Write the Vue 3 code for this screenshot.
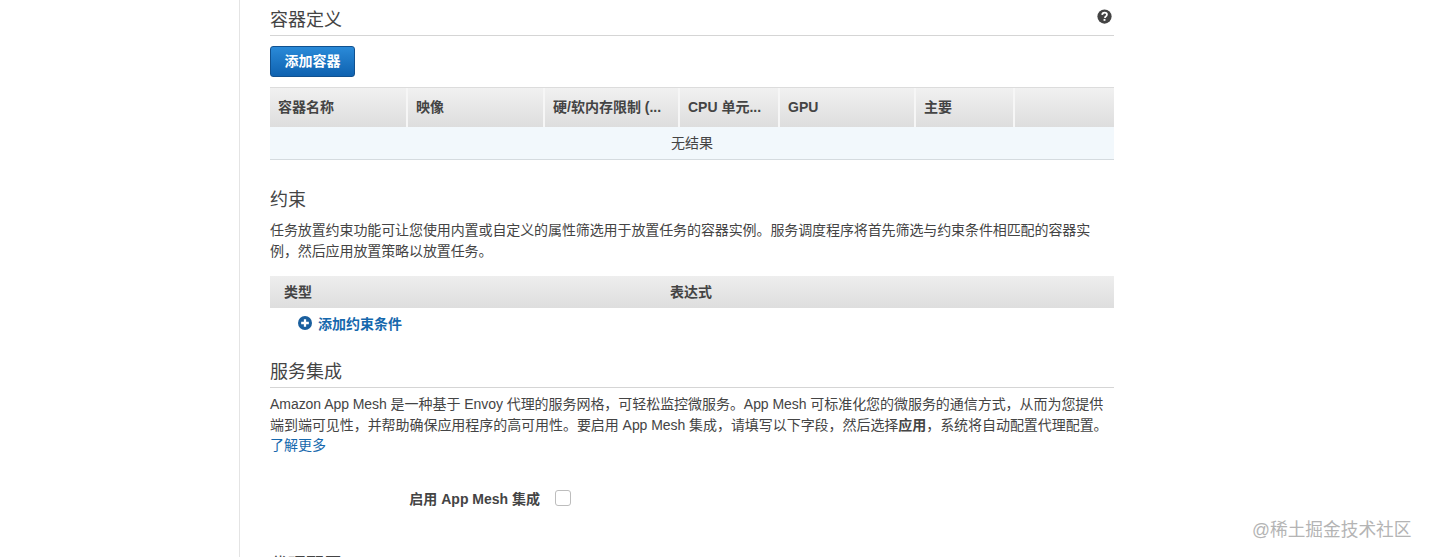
<script setup>
const columns = [
  { label: '容器名称', width: 138 },
  { label: '映像', width: 137 },
  { label: '硬/软内存限制 (...', width: 135 },
  { label: 'CPU 单元...', width: 100 },
  { label: 'GPU', width: 136 },
  { label: '主要', width: 99 },
  { label: '', width: 99 }
]
</script>

<template>
  <div class="page">
    <main class="content">
      <header class="heading first">
        <h2>容器定义</h2>
        <svg class="help" viewBox="0 0 16 16" width="15" height="15" aria-label="帮助">
          <circle cx="8" cy="8" r="7.6" fill="#444" />
          <path d="M5.5 6.3C5.6 4.7 6.7 3.8 8.1 3.8c1.5 0 2.5.9 2.5 2.1 0 1-.6 1.6-1.3 2.1-.5.3-.7.6-.7 1.1v.4" fill="none" stroke="#fff" stroke-width="1.9" />
          <rect x="7" y="10.6" width="2" height="2" fill="#fff" />
        </svg>
      </header>
      <button class="primary" type="button">添加容器</button>

      <div class="grid-table">
        <div class="grid-head">
          <div v-for="c in columns" :key="c.label" class="grid-cell" :style="{ width: c.width + 'px' }">{{ c.label }}</div>
        </div>
        <div class="grid-empty">无结果</div>
      </div>

      <h2 class="plain-title">约束</h2>
      <p class="constraint-text">任务放置约束功能可让您使用内置或自定义的属性筛选用于放置任务的容器实例。服务调度程序将首先筛选与约束条件相匹配的容器实例，然后应用放置策略以放置任务。</p>

      <div class="constraint-head">
        <div class="c-type">类型</div>
        <div>表达式</div>
      </div>
      <a class="add-link">
        <svg viewBox="0 0 16 16" width="14" height="14">
          <circle cx="8" cy="8" r="8" fill="#1a5f9e" />
          <path d="M8 3.6v8.8M3.6 8h8.8" stroke="#fff" stroke-width="2.6" />
        </svg>
        <span>添加约束条件</span>
      </a>

      <header class="heading mesh">
        <h2>服务集成</h2>
      </header>
      <p class="mesh-text">Amazon App Mesh 是一种基于 Envoy 代理的服务网格，可轻松监控微服务。App Mesh 可标准化您的微服务的通信方式，从而为您提供端到端可见性，并帮助确保应用程序的高可用性。要启用 App Mesh 集成，请填写以下字段，然后选择<b>应用</b>，系统将自动配置代理配置。<a class="learn">了解更多</a></p>

      <div class="field">
        <label class="field-label">启用 App Mesh 集成</label>
        <span class="checkbox"></span>
      </div>

      <h2 class="plain-title next">代理配置</h2>
    </main>
    <div class="watermark">@稀土掘金技术社区</div>
  </div>
</template>

<style scoped>
.page {
  position: relative;
  height: 557px;
  overflow: hidden;
  background: #fff;
  font-family: "Liberation Sans", "Noto Sans CJK SC", sans-serif;
  color: #444;
  font-size: 14px;
}
.content {
  box-sizing: border-box;
  width: 875px;
  height: 700px;
  margin-left: 239px;
  padding: 0 0 0 30px;
  border-left: 1px solid #e4e4e4;
}
.content > * { width: 844px; box-sizing: border-box; }
h2 {
  margin: 0;
  font-size: 18px;
  font-weight: 400;
  line-height: 24px;
  color: #444;
}
.heading {
  display: flex;
  justify-content: space-between;
  align-items: flex-start;
  border-bottom: 1px solid #d5d5d5;
}
.first { height: 36px; padding-top: 8px; }
.help { margin: 1px 2px 0 0; }
.primary {
  display: block;
  width: 85px;
  height: 31px;
  margin-top: 10px;
  padding: 0 0 3px;
  border: 1px solid #11518f;
  border-radius: 3px;
  background: linear-gradient(#2a8ad8, #0f62b0);
  color: #fff;
  font: 700 14px "Liberation Sans", "Noto Sans CJK SC", sans-serif;
}
.grid-table { margin-top: 10px; }
.grid-head {
  box-sizing: border-box;
  display: flex;
  height: 40px;
  border-top: 1px solid #dcdcdc;
  background: linear-gradient(#f1f1f1, #dddddd);
}
.grid-cell {
  box-sizing: border-box;
  padding: 0 8px;
  border-right: 2px solid #f6f6f6;
  font-weight: 700;
  line-height: 39px;
  white-space: nowrap;
  overflow: hidden;
}
.grid-cell:last-child { border-right: 0; }
.grid-empty {
  box-sizing: border-box;
  height: 33px;
  border-bottom: 1px solid #d5dbdf;
  background: #f2f8fc;
  text-align: center;
  line-height: 32px;
}
.plain-title { margin-top: 28px; }
.constraint-text {
  margin: 8px 0 0;
  line-height: 21px;
  letter-spacing: -0.1px;
}
.constraint-head {
  display: flex;
  height: 32px;
  margin-top: 14px;
  background: linear-gradient(#eeeeee, #dedede);
  font-weight: 700;
  line-height: 33px;
}
.c-type { box-sizing: border-box; width: 400px; padding-left: 14px; }
.add-link {
  display: flex;
  align-items: center;
  gap: 6px;
  height: 32px;
  padding: 0 0 2px 28px;
  color: #1668ad;
  font-weight: 700;
}
.mesh { height: 28px; margin-top: 20px; }
.mesh-text {
  margin: 6px 0 0;
  line-height: 20.5px;
  letter-spacing: -0.05px;
}
.mesh-text b { font-weight: 700; }
.learn { display: block; color: #1668ad; letter-spacing: 0; }
.field {
  display: flex;
  align-items: center;
  height: 18px;
  margin-top: 33px;
}
.field-label {
  width: 270px;
  text-align: right;
  font-weight: 700;
}
.checkbox {
  box-sizing: border-box;
  width: 16px;
  height: 16px;
  margin-left: 15px;
  border: 1px solid #bdbdbd;
  border-radius: 3px;
  background: #fff;
}
.next { margin-top: 46px; }
.watermark {
  position: absolute;
  left: 1252px;
  top: 518px;
  font-size: 17.7px;
  line-height: 24px;
  color: #b4b4b4;
  white-space: nowrap;
}
</style>
